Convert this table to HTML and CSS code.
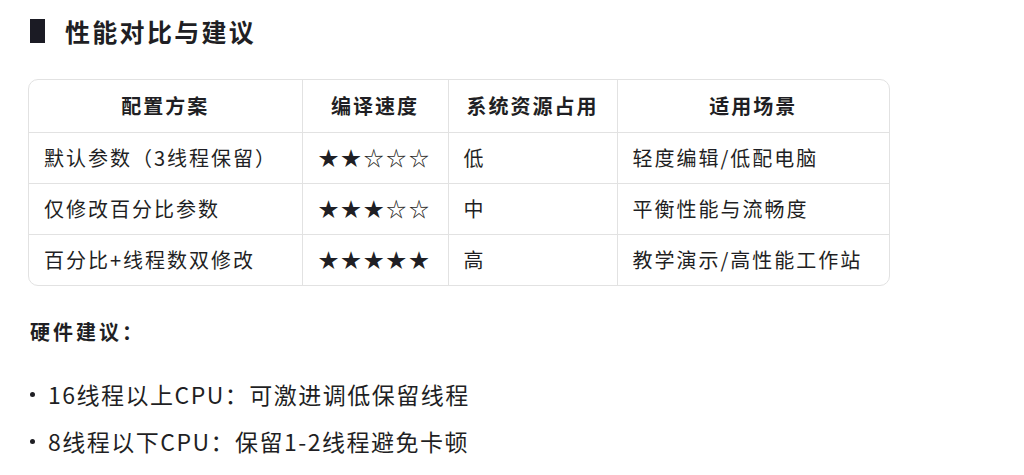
FILE: index.html
```html
<!DOCTYPE html>
<html lang="zh-CN">
<head>
<meta charset="utf-8">
<link rel="stylesheet" href="styles.css">
</head>
<body>
<div class="page">
  <h2 class="title"><span class="mark"></span>性能对比与建议</h2>
  <div class="table-wrap">
    <table class="cmp">
      <colgroup>
        <col class="c1"><col class="c2"><col class="c3"><col class="c4">
      </colgroup>
      <thead>
        <tr><th>配置方案</th><th>编译速度</th><th>系统资源占用</th><th>适用场景</th></tr>
      </thead>
      <tbody>
        <tr><td>默认参数（3线程保留）</td><td class="stars">★★☆☆☆</td><td>低</td><td>轻度编辑/低配电脑</td></tr>
        <tr><td>仅修改百分比参数</td><td class="stars">★★★☆☆</td><td>中</td><td>平衡性能与流畅度</td></tr>
        <tr><td>百分比+线程数双修改</td><td class="stars">★★★★★</td><td>高</td><td>教学演示/高性能工作站</td></tr>
      </tbody>
    </table>
  </div>
  <p class="sub">硬件建议：</p>
  <ul class="tips">
    <li>16线程以上CPU：可激进调低保留线程</li>
    <li>8线程以下CPU：保留1-2线程避免卡顿</li>
  </ul>
</div>
</body>
</html>
```

FILE: styles.css
```css
* { box-sizing: border-box; }
html, body { margin: 0; padding: 0; background: #ffffff; }
body {
  font-family: "Noto Sans CJK SC", "Noto Sans", sans-serif;
  color: #1f1f24;
}
.page { padding: 11px 0 0 28px; }
.title {
  display: flex;
  align-items: center;
  margin: 0;
  height: 40px;
  font-size: 25px;
  font-weight: 700;
  letter-spacing: 2.3px;
}
.mark {
  display: inline-block;
  width: 15px;
  height: 24px;
  background: #1b1b24;
  margin: 0 20px 0 2px;
}
.table-wrap {
  margin-top: 28px;
  width: 862px;
  border: 1px solid #e2e2e2;
  border-radius: 10px;
  overflow: hidden;
}
.cmp {
  width: 100%;
  border-collapse: collapse;
  table-layout: fixed;
}
.c1 { width: 273px; }
.c2 { width: 146px; }
.c3 { width: 169px; }
.c4 { width: 272px; }
.cmp th, .cmp td {
  border-right: 1px solid #e2e2e2;
  border-bottom: 1px solid #e2e2e2;
  height: 51px;
  padding: 0 0 0 15px;
  font-size: 20px;
  letter-spacing: 2px;
  white-space: nowrap;
}
.cmp th:last-child, .cmp td:last-child { border-right: none; }
.cmp tbody tr:last-child td { border-bottom: none; height: 51px; }
.cmp th {
  font-weight: 700;
  text-align: center;
  padding: 0;
  height: 52px;
}
.cmp td { text-align: left; font-weight: 400; }
.cmp td.stars { padding-left: 16px; letter-spacing: 2.6px; }
.sub {
  margin: 31px 0 0 2px;
  line-height: 30px;
  font-size: 20px;
  font-weight: 700;
  letter-spacing: 3px;
}
.tips {
  list-style: none;
  margin: 23px 0 0 0;
  padding: 0;
}
.tips li {
  display: flex;
  align-items: center;
  height: 47px;
  font-size: 23px;
  letter-spacing: 1.5px;
}
.tips li::before {
  content: "";
  width: 5px;
  height: 5px;
  border-radius: 50%;
  background: #1f1f24;
  margin: 2px 13px 0 2px;
  flex: none;
}
```
